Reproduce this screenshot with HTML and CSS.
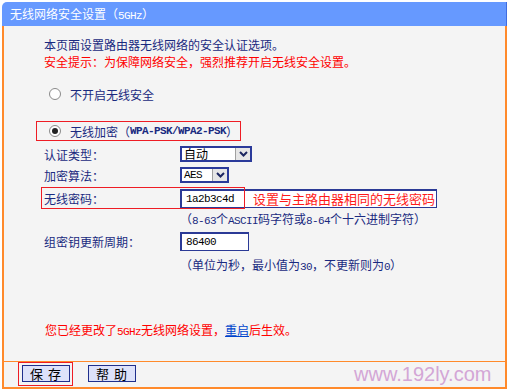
FILE: index.html
```html
<!DOCTYPE html>
<html lang="zh-CN">
<head>
    <meta charset="UTF-8">
    <title>无线网络安全设置</title>
    <link rel="stylesheet" href="styles.css">
</head>
<body>

    <div class="panel">
        <!-- Header -->
        <div class="title">无线网络安全设置（<span class="en">5GHz</span>）</div>

        <div class="content">
            <p class="intro">
                本页面设置路由器无线网络的安全认证选项。<br>
                <span class="warn">安全提示：为保障网络安全，强烈推荐开启无线安全设置。</span>
            </p>

            <div class="radio-row">
                <span class="radio"></span>不开启无线安全
            </div>

            <div class="radio-row mark">
                <span class="radio on"></span>无线加密（<span class="en strong">WPA-PSK/WPA2-PSK</span>）
            </div>

            <div class="row row-auth">
                <span class="label">认证类型：</span>
                <div class="select select-auth">
                    <span class="val">自动</span>
                    <span class="arrow"><svg width="9" height="6" viewBox="0 0 9 6"><polyline points="1,1 4.5,4.5 8,1" fill="none" stroke="#1b2560" stroke-width="2"/></svg></span>
                </div>
            </div>

            <div class="row row-alg">
                <span class="label">加密算法：</span>
                <div class="select select-alg">
                    <span class="val en">AES</span>
                    <span class="arrow"><svg width="9" height="6" viewBox="0 0 9 6"><polyline points="1,1 4.5,4.5 8,1" fill="none" stroke="#1b2560" stroke-width="2"/></svg></span>
                </div>
            </div>

            <div class="row row-pwd">
                <span class="label">无线密码：</span>
                <div class="input input-pwd">
                    <span class="en">1a2b3c4d</span>
                    <span class="annot-text">设置与主路由器相同的无线密码</span>
                </div>
                <span class="annot"></span>
            </div>

            <div class="hint">（<span class="en">8-63</span>个<span class="en">ASCII</span>码字符或<span class="en">8-64</span>个十六进制字符）</div>

            <div class="row row-group">
                <span class="label">组密钥更新周期：</span>
                <div class="input input-group"><span class="en">86400</span></div>
            </div>

            <div class="hint hint-2">（单位为秒，最小值为<span class="en">30</span>，不更新则为<span class="en">0</span>）</div>

            <p class="notice">您已经更改了<span class="en">5GHz</span>无线网络设置，<a href="#" class="link">重启</a>后生效。</p>
        </div>

        <!-- Buttons -->
        <div class="footer">
            <div class="save-mark"><button class="btn">保&nbsp;存</button></div>
            <button class="btn btn-help">帮&nbsp;助</button>
        </div>

        <div class="watermark">www.192ly.com</div>
    </div>

</body>
</html>
```

FILE: styles.css
```css
/* Page */
body {
    margin: 0;
    background: #fff;
    font-family: "Noto Sans CJK SC", sans-serif;
    font-size: 12px;
    color: #1a2a80;
}

/* half-width latin runs, like the router's SimSun text */
.en {
    font-family: "Liberation Mono", monospace;
    font-size: 11px;
    letter-spacing: -0.6px;
}

.strong {
    font-weight: bold;
}

/* Outer frame */
.panel {
    position: relative;
    width: 505px;
    margin: 2px 0 0 2px;
}

.title {
    height: 24px;
    line-height: 24px;
    box-sizing: border-box;
    padding-left: 8px;
    background: #6699ff;
    color: #fff;
    border-top-left-radius: 5px;
    border-right: 1px solid #3f6de0;
}

.content {
    height: 335px;
    box-sizing: border-box;
    padding-top: 10px;
    background: #f4f4f4;
    border-left: 2px solid #ff8a2b;
    border-right: 2px solid #ff8a2b;
    display: flex;
    flex-direction: column;
}

.intro {
    margin: 0 0 0 40px;
    line-height: 17px;
}

.warn {
    color: #ff0000;
}

/* Radio rows */
.radio-row {
    margin: 14px 0 0 45px;
    height: 20px;
    display: flex;
    align-items: center;
}

.radio {
    width: 12px;
    height: 12px;
    box-sizing: border-box;
    margin-right: 9px;
    border: 1px solid #8a8a8a;
    border-radius: 50%;
    background: #fff;
    display: flex;
    align-items: center;
    justify-content: center;
}

.radio.on::after {
    content: "";
    width: 6px;
    height: 6px;
    border-radius: 50%;
    background: #222;
}

.mark {
    align-self: flex-start;
    margin: 17px 0 0 32px;
    box-sizing: border-box;
    padding: 0 2px 0 12px;
    border: 1px solid #ee1c24;
}

/* Form rows */
.row {
    position: relative;
    height: 18px;
    padding-left: 40px;
    display: flex;
    align-items: center;
}

.row .label {
    width: 136px;
}

.row-auth { margin-top: 4px; }
.row-alg { margin-top: 3px; }
.row-pwd { margin-top: 3px; height: 22px; }
.row-group { margin-top: 4px; height: 19px; }

.select {
    height: 16px;
    box-sizing: border-box;
    border: 2px solid #2a3a9a;
    background: #fff;
    display: flex;
}

.select-auth { width: 72px; }
.select-alg { width: 49px; }

.select .val {
    flex: 1;
    padding-left: 2px;
    line-height: 12px;
    color: #000;
}

.select .arrow {
    width: 14px;
    background: #e6e6e6;
    border-left: 1px solid #a0a0a0;
    display: flex;
    align-items: center;
    justify-content: center;
}

.input {
    height: 19px;
    box-sizing: border-box;
    padding-left: 4px;
    border: 1px solid #2b3a96;
    border-width: 2px 1px 1px 2px;
    background: #fff;
    color: #000;
    display: flex;
    align-items: center;
}

.input-pwd { width: 257px; }
.input-group { width: 69px; }

.annot-text {
    margin-left: 19px;
    color: #ff1a1a;
    font-size: 13px;
}

/* red annotation box drawn over the row */
.annot {
    position: absolute;
    left: 37px;
    top: 0;
    width: 204px;
    height: 22px;
    box-sizing: border-box;
    border: 1px solid #ee1c24;
}

.hint {
    margin-top: 1px;
    padding-left: 176px;
    height: 18px;
    line-height: 18px;
}

.hint-2 { margin-top: 5px; }

.notice {
    margin: 47px 0 0 41px;
    line-height: 18px;
    color: #ff0000;
}

.link {
    color: #0044cc;
}

/* Bottom bar */
.footer {
    height: 28px;
    box-sizing: border-box;
    padding-left: 14px;
    background: #f4f4f4;
    border: 2px solid #ff8a2b;
    border-top-width: 1px;
    display: flex;
    align-items: flex-start;
}

.save-mark {
    padding: 2px 2px 3px 3px;
    border: 1px solid #ee1c24;
    display: flex;
}

.btn {
    width: 48px;
    height: 17px;
    box-sizing: border-box;
    padding: 0;
    border: 1px solid #1f2f8c;
    background: #dde2fa;
    color: #000;
    font-family: "Noto Sans CJK SC", sans-serif;
    font-size: 13px;
    line-height: 15px;
    letter-spacing: 1px;
}

.btn-help {
    margin: 3px 0 0 15px;
}

.watermark {
    position: absolute;
    left: 352px;
    top: 362px;
    font-family: "Liberation Sans", sans-serif;
    font-size: 20px;
    line-height: 1;
    color: #d3a6d6;
}
```
